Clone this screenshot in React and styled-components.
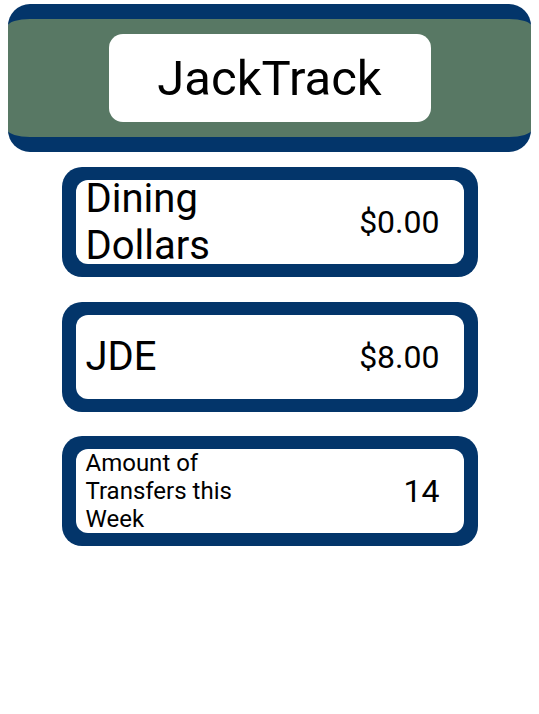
import React from "react";
import styled, { createGlobalStyle } from "styled-components";

const navy = "#03356a";
const green = "#587864";

const GlobalStyle = createGlobalStyle`
  * {
    box-sizing: border-box;
  }

  body {
    margin: 0;
    background: #ffffff;
    font-family: Roboto, "Liberation Sans", sans-serif;
    color: #000000;
  }
`;

const balances = [
  { label: "Dining Dollars", value: "$0.00", size: 40 },
  { label: "JDE", value: "$8.00", size: 40 },
  { label: "Amount of Transfers this Week", value: "14", size: 24 },
];

export default function App() {
  return (
    <>
      <GlobalStyle />
      <Page>
        <Header>
          <TitleBox>
            <Title>JackTrack</Title>
          </TitleBox>
        </Header>
        <CardList>
          {balances.map(({ label, value, size }) => (
            <Card key={label}>
              <CardBody>
                <Label size={size}>{label}</Label>
                <Value>{value}</Value>
              </CardBody>
            </Card>
          ))}
        </CardList>
      </Page>
    </>
  );
}

const Page = styled.div`
  display: flex;
  flex-direction: column;
  align-items: center;
  gap: 15px;
  padding: 4px 8px;
`;

const Header = styled.header`
  width: 100%;
  height: 148px;
  display: flex;
  justify-content: center;
  align-items: center;
  background: ${green};
  border-top: 15px solid ${navy};
  border-bottom: 15px solid ${navy};
  border-radius: 22px;
`;

const TitleBox = styled.div`
  width: 322px;
  height: 88px;
  display: flex;
  justify-content: center;
  align-items: center;
  background: #ffffff;
  border-radius: 14px;
`;

const Title = styled.h1`
  margin: 0;
  font-size: 49px;
  font-weight: 400;
  line-height: 1;
`;

const CardList = styled.div`
  display: flex;
  flex-direction: column;
  gap: 24.5px;
`;

const Card = styled.div`
  width: 416px;
  height: 110px;
  padding: 13px 14px;
  background: ${navy};
  border-radius: 20px;
`;

const CardBody = styled.div`
  height: 100%;
  display: flex;
  justify-content: space-between;
  align-items: center;
  padding: 0 24px 0 10px;
  background: #ffffff;
  border-radius: 12px;
`;

const Label = styled.span`
  flex: 0 0 50%;
  font-size: ${({ size }) => size}px;
`;

const Value = styled.span`
  font-size: 32px;
`;
